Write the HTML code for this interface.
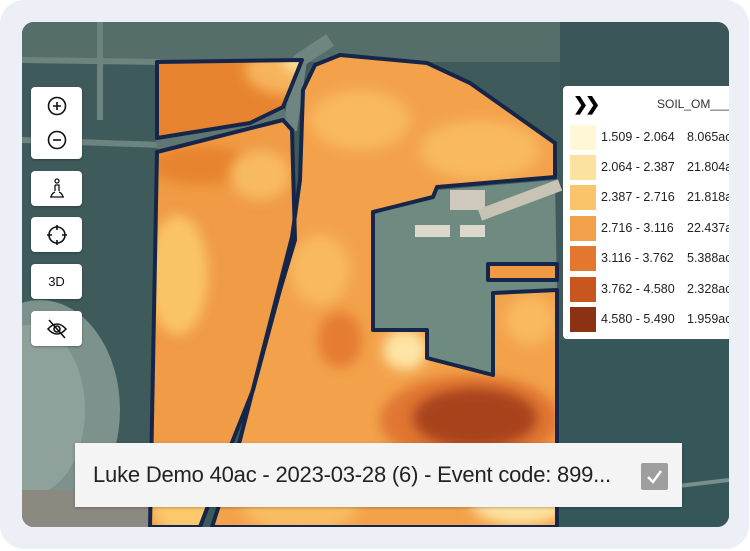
<!DOCTYPE html>
<html><head><meta charset="utf-8"><style>
*{margin:0;padding:0;box-sizing:border-box}
body{width:750px;height:551px;background:#fff;position:relative;overflow:hidden;font-family:"Liberation Sans",sans-serif}
.frame{position:absolute;left:0;top:0;width:749px;height:549px;background:#eceff6;border-radius:24px}
.map{position:absolute;left:22px;top:22px;width:707px;height:505px;border-radius:12px;overflow:hidden;background:#3f5a5b}
.map svg{position:absolute;left:0;top:0}
.btn{position:absolute;left:31px;width:51px;background:#fff;border-radius:4px;box-shadow:0 1px 2px rgba(0,0,0,.3);display:flex;align-items:center;justify-content:center}
.legend{position:absolute;width:166px;height:253px;background:#fff;border-radius:4px 0 0 4px}
.row{position:absolute;left:7px;height:25px;font-size:12.5px;color:#222;line-height:25px;white-space:nowrap}
.sw{position:absolute;left:0;top:0;width:26px;height:25px}
.row span.a{position:absolute;left:31px}
.row span.b{position:absolute;left:117px}
.bar{position:absolute;left:75px;top:443px;width:607px;height:64px;background:#f4f4f4;box-shadow:0 1px 3px rgba(0,0,0,.25)}
.bar .t{position:absolute;left:18px;top:19px;font-size:22px;color:#222;letter-spacing:-0.2px;white-space:nowrap;transform:scaleX(1.0);transform-origin:left}
.cb{position:absolute;left:566px;top:20px;width:27px;height:27px;background:#9e9e9e;border-radius:2px}
</style></head><body>
<div class="frame"></div>
<div class="map">
<svg width="707" height="505" viewBox="22 22 707 505">
<defs>
<filter id="bl" x="-50%" y="-50%" width="200%" height="200%"><feGaussianBlur stdDeviation="6"/></filter>
<clipPath id="f1"><polygon points="157,62 302,60 283,107 250,123 157,138"/></clipPath>
<clipPath id="f2"><polygon points="157,152 283,120 292,130 295,240 280,290 253,390 233,440 200,527 150,527"/></clipPath>
<clipPath id="f3"><polygon points="303,90 315,65 340,55 427,63 470,83 555,143 555,177 437,187 433,197 373,212 373,330 427,330 427,358 493,375 493,293 557,290 557,527 212,527 240,440 292,237 300,180"/></clipPath>
</defs>
<rect x="22" y="22" width="707" height="505" fill="#3f5a5b"/>
<rect x="22" y="22" width="707" height="40" fill="#566e6a"/>
<path d="M22 60 L160 62 M22 140 L160 145 M100 22 L100 120" stroke="#6d8380" stroke-width="6" fill="none"/>
<path d="M290 130 L300 60 L330 40" stroke="#6f8581" stroke-width="14" fill="none"/>
<path d="M157 145 L285 112" stroke="#5f7673" stroke-width="14" fill="none"/>
<ellipse cx="40" cy="410" rx="80" ry="110" fill="#7d928d"/>
<ellipse cx="30" cy="410" rx="55" ry="85" fill="#8ea19b"/>
<rect x="22" y="490" width="130" height="37" fill="#8c8a80"/>
<rect x="560" y="22" width="169" height="70" fill="#3a5658"/>
<rect x="560" y="340" width="169" height="187" fill="#36575a"/>
<path d="M560 500 L729 480" stroke="#7a8f8c" stroke-width="4"/>
<polygon points="375,212 437,190 555,180 557,290 493,293 493,375 427,358 427,330 373,330" fill="#6f8a80"/>
<rect x="415" y="225" width="35" height="12" fill="#ddd8cc"/>
<rect x="460" y="225" width="25" height="12" fill="#ddd8cc"/>
<rect x="450" y="190" width="35" height="20" fill="#cfcabd"/>
<path d="M480 215 Q520 200 560 185" stroke="#c8c3b5" stroke-width="12" fill="none"/>
<rect x="488" y="264" width="69" height="16" fill="#f09a44"/>
<g clip-path="url(#f1)">
<rect x="150" y="55" width="160" height="90" fill="#e8842f"/>
<ellipse cx="290" cy="70" rx="45" ry="25" fill="#f6b45c" filter="url(#bl)"/>
<ellipse cx="298" cy="62" rx="15" ry="10" fill="#fde1a0" filter="url(#bl)"/>
</g>
<g clip-path="url(#f2)">
<rect x="140" y="115" width="160" height="415" fill="#f09b45"/>
<ellipse cx="200" cy="165" rx="50" ry="20" fill="#e8842f" filter="url(#bl)"/>
<ellipse cx="260" cy="175" rx="30" ry="25" fill="#f8ba60" filter="url(#bl)"/>
<ellipse cx="178" cy="275" rx="30" ry="60" fill="#fac466" filter="url(#bl)"/>
<ellipse cx="210" cy="505" rx="60" ry="40" fill="#fbc86c" filter="url(#bl)"/>
</g>
<g clip-path="url(#f3)">
<rect x="200" y="50" width="370" height="480" fill="#f3a24b"/>
<ellipse cx="360" cy="120" rx="50" ry="30" fill="#f8b95e" filter="url(#bl)"/>
<ellipse cx="480" cy="150" rx="60" ry="30" fill="#f8b95e" filter="url(#bl)"/>
<ellipse cx="320" cy="270" rx="30" ry="35" fill="#f8b95e" filter="url(#bl)"/>
<ellipse cx="340" cy="340" rx="22" ry="28" fill="#e57c30" filter="url(#bl)"/>
<ellipse cx="405" cy="350" rx="22" ry="20" fill="#fde5a5" filter="url(#bl)"/>
<ellipse cx="470" cy="420" rx="90" ry="45" fill="#e07630" filter="url(#bl)"/>
<ellipse cx="475" cy="418" rx="62" ry="30" fill="#a8431c" filter="url(#bl)"/>
<ellipse cx="520" cy="500" rx="50" ry="25" fill="#fde3a0" filter="url(#bl)"/>
<ellipse cx="300" cy="500" rx="60" ry="35" fill="#f8bc62" filter="url(#bl)"/>
<ellipse cx="530" cy="320" rx="25" ry="25" fill="#f8b95e" filter="url(#bl)"/>
</g>
<g fill="none" stroke="#15264a" stroke-width="4" stroke-linejoin="round">
<polygon points="157,62 302,60 283,107 250,123 157,138"/>
<polygon points="157,152 283,120 292,130 295,240 280,290 253,390 233,440 200,527 150,527"/>
<polygon points="303,90 315,65 340,55 427,63 470,83 555,143 555,177 437,187 433,197 373,212 373,330 427,330 427,358 493,375 493,293 557,290 557,527 212,527 240,440 292,237 300,180"/>
<rect x="488" y="264" width="69" height="16"/>
</g>
</svg>
<div class="legend" style="left:541px;top:64px">
<div style="position:absolute;left:10px;top:8px;font-size:18px;font-weight:bold;letter-spacing:-3px">&#x276F;&#x276F;</div>
<div style="position:absolute;left:94px;top:11px;font-size:12px;color:#333">SOIL_OM___</div>
<div class="row" style="top:39px"><div class="sw" style="background:#fff7d6"></div><span class="a">1.509 - 2.064</span><span class="b">8.065ac</span></div>
<div class="row" style="top:69px"><div class="sw" style="background:#fbe2a0"></div><span class="a">2.064 - 2.387</span><span class="b">21.804ac</span></div>
<div class="row" style="top:99px"><div class="sw" style="background:#f9c46c"></div><span class="a">2.387 - 2.716</span><span class="b">21.818ac</span></div>
<div class="row" style="top:130px"><div class="sw" style="background:#f3a04a"></div><span class="a">2.716 - 3.116</span><span class="b">22.437ac</span></div>
<div class="row" style="top:160px"><div class="sw" style="background:#e4772f"></div><span class="a">3.116 - 3.762</span><span class="b">5.388ac</span></div>
<div class="row" style="top:191px"><div class="sw" style="background:#c9561f"></div><span class="a">3.762 - 4.580</span><span class="b">2.328ac</span></div>
<div class="row" style="top:221px"><div class="sw" style="background:#8c3213"></div><span class="a">4.580 - 5.490</span><span class="b">1.959ac</span></div>
</div>
</div>
<div class="btn" style="top:87px;height:72px;flex-direction:column;gap:14px">
<svg width="20" height="20" viewBox="0 0 20 20"><circle cx="10" cy="10" r="8.5" fill="none" stroke="#111" stroke-width="1.6"/><path d="M6 10H14M10 6V14" stroke="#111" stroke-width="1.6"/></svg>
<svg width="20" height="20" viewBox="0 0 20 20"><circle cx="10" cy="10" r="8.5" fill="none" stroke="#111" stroke-width="1.6"/><path d="M6 10H14" stroke="#111" stroke-width="1.6"/></svg>
</div>
<div class="btn" style="top:171px;height:35px"><svg width="18" height="22" viewBox="0 0 18 22" fill="none" stroke="#111" stroke-width="1.3"><circle cx="9" cy="3" r="2"/><path d="M7 7H11V13M7 7V13M2 19H16M3 19Q4 15 7 14M15 19Q14 15 11 14"/></svg></div>
<div class="btn" style="top:217px;height:35px"><svg width="22" height="22" viewBox="0 0 22 22" fill="none" stroke="#111" stroke-width="1.6"><circle cx="11" cy="11" r="8"/><path d="M11 1V6M11 16V21M1 11H6M16 11H21"/></svg></div>
<div class="btn" style="top:264px;height:35px;font-size:13px;color:#111">3D</div>
<div class="btn" style="top:311px;height:35px"><svg width="22" height="20" viewBox="0 0 22 20" fill="none" stroke="#111" stroke-width="1.6"><path d="M2 10Q11 0 20 10Q11 20 2 10Z"/><circle cx="11" cy="10" r="3"/><path d="M3 1L19 19"/></svg></div>
<div class="bar"><div class="t">Luke Demo 40ac - 2023-03-28 (6) - Event code: 899...</div>
<div class="cb"><svg width="27" height="27" viewBox="0 0 27 27"><path d="M7 14L12 19L20 8" stroke="#fff" stroke-width="2.5" fill="none"/></svg></div></div>
</body></html>
